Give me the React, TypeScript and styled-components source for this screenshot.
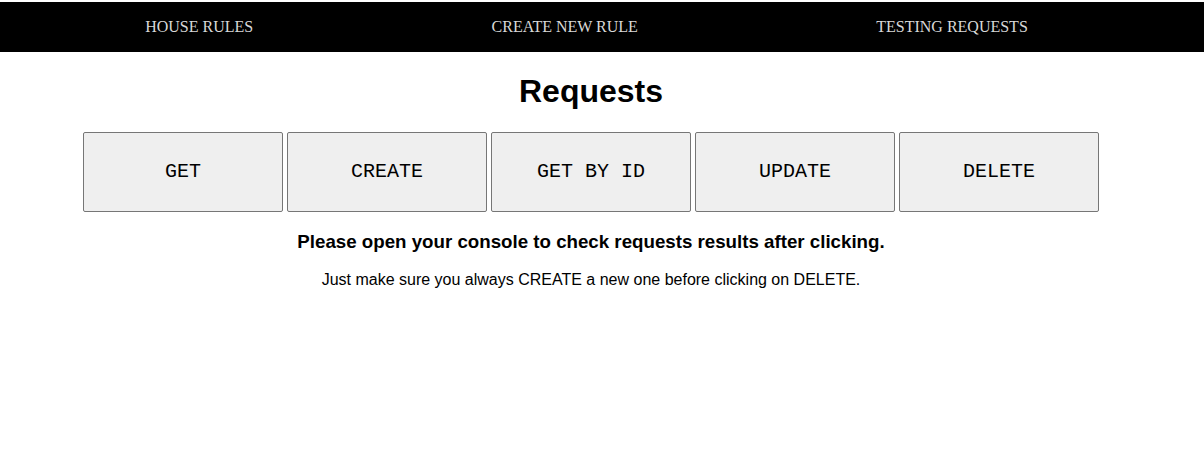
import React from "react";
import styled, { createGlobalStyle } from "styled-components";

const Global = createGlobalStyle`
  html, body { margin: 0; padding: 0; background: #fff; }
  body { padding-top: 2px; }
`;

const Nav = styled.nav`
  height: 50px;
  background: #000;
  display: flex;
  align-items: center;
  justify-content: space-around;
  padding: 0 57px 0 26px;
`;

const NavLink = styled.a`
  font-family: "Liberation Serif", "Times New Roman", serif;
  font-size: 16px;
  color: #d8d8d8;
  text-decoration: none;
  cursor: pointer;
`;

const Main = styled.main`
  display: flex;
  flex-direction: column;
  align-items: center;
  padding-right: 22px;
  font-family: "Liberation Sans", Arial, sans-serif;
  color: #000;
`;

const Title = styled.h1`
  font-size: 32px;
  font-weight: bold;
  margin: 21px 0 22px;
  line-height: 37px;
`;

const ButtonRow = styled.div`
  display: flex;
  gap: 4px;
`;

const ActionButton = styled.button`
  width: 200px;
  height: 80px;
  padding: 0 0 2px;
  background: #efefef;
  border: 1px solid #767676;
  border-radius: 2px;
  font-family: "Liberation Mono", "Courier New", monospace;
  font-size: 20px;
  color: #000;
  cursor: pointer;
`;

const Notice = styled.h3`
  font-size: 18.72px;
  font-weight: bold;
  margin: 19px 0 0;
  line-height: 22px;
`;

const Hint = styled.p`
  font-size: 16px;
  margin: 18px 0 0;
  line-height: 18px;
`;

const actions = ["GET", "CREATE", "GET BY ID", "UPDATE", "DELETE"];

export default function App() {
  return (
    <>
      <Global />
      <Nav>
        <NavLink>HOUSE RULES</NavLink>
        <NavLink>CREATE NEW RULE</NavLink>
        <NavLink>TESTING REQUESTS</NavLink>
      </Nav>
      <Main>
        <Title>Requests</Title>
        <ButtonRow>
          {actions.map((a) => (
            <ActionButton key={a}>{a}</ActionButton>
          ))}
        </ButtonRow>
        <Notice>Please open your console to check requests results after clicking.</Notice>
        <Hint>Just make sure you always CREATE a new one before clicking on DELETE.</Hint>
      </Main>
    </>
  );
}
